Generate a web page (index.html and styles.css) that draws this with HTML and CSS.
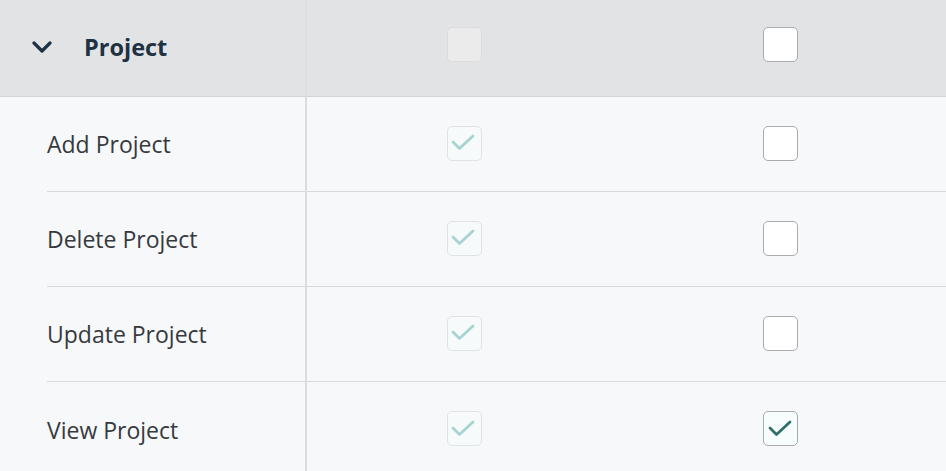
FILE: index.html
```html
<!DOCTYPE html>
<html>
<head>
<meta charset="utf-8">
<link rel="stylesheet" href="styles.css">
</head>
<body>
<div class="perm-table">
  <div class="row head">
    <div class="label-cell">
      <svg class="chev" width="20" height="12" viewBox="0 0 20 12"><path d="M2 2 L10 10 L18 2" fill="none" stroke="#1e3244" stroke-width="3.2" stroke-linecap="round" stroke-linejoin="round"/></svg>
      <span class="group-name">Project</span>
    </div>
    <div class="cell"><span class="cb cb-disabled"></span></div>
    <div class="cell last"><span class="cb"></span></div>
  </div>

  <div class="row">
    <div class="label-cell"><div class="label-inner">Add Project</div></div>
    <div class="cell"><span class="cb cb-disabled"><svg viewBox="0 0 35 35"><path d="M7 17 L13.5 23.5 L27 11" /></svg></span></div>
    <div class="cell last"><span class="cb"></span></div>
  </div>

  <div class="row">
    <div class="label-cell"><div class="label-inner">Delete Project</div></div>
    <div class="cell"><span class="cb cb-disabled"><svg viewBox="0 0 35 35"><path d="M7 17 L13.5 23.5 L27 11" /></svg></span></div>
    <div class="cell last"><span class="cb"></span></div>
  </div>

  <div class="row">
    <div class="label-cell"><div class="label-inner">Update Project</div></div>
    <div class="cell"><span class="cb cb-disabled"><svg viewBox="0 0 35 35"><path d="M7 17 L13.5 23.5 L27 11" /></svg></span></div>
    <div class="cell last"><span class="cb"></span></div>
  </div>

  <div class="row final">
    <div class="label-cell"><div class="label-inner">View Project</div></div>
    <div class="cell"><span class="cb cb-disabled"><svg viewBox="0 0 35 35"><path d="M7 17 L13.5 23.5 L27 11" /></svg></span></div>
    <div class="cell last"><span class="cb cb-checked"><svg viewBox="0 0 35 35"><path d="M7 17 L13.5 23.5 L27 11" /></svg></span></div>
  </div>
</div>
</body>
</html>
```

FILE: styles.css
```css
html, body {
  margin: 0;
  padding: 0;
  background: #f7f8fa;
}
body {
  font-family: "Open Sans", "Noto Sans", sans-serif;
  width: 946px;
  height: 471px;
  overflow: hidden;
}
.perm-table {
  display: flex;
  flex-direction: column;
}
.row {
  display: grid;
  grid-template-columns: 307px 314px 1fr;
  height: 95px;
  background: #f7f8fa;
}
.row.head {
  height: 97px;
  background: #e2e3e4;
}
.row.head .label-cell,
.row.head .cell {
  border-bottom: 1px solid #d3d4d6;
}
.label-cell {
  border-right: 2px solid #dcdddf;
  display: flex;
  align-items: stretch;
  padding-left: 47px;
}
.row.head .label-cell {
  padding-left: 32px;
  align-items: center;
  gap: 32px;
}
.chev {
  display: block;
  margin-top: -2px;
}
.group-name {
  font-weight: 700;
  font-size: 23.5px;
  color: #1e3244;
  margin-top: -3px;
}
.label-inner {
  flex: 1;
  display: flex;
  align-items: center;
  border-bottom: 1px solid #d8d9db;
  font-size: 23px;
  color: #363a3e;
  padding-left: 0;
}
.row.final .label-inner,
.row.final .cell {
  border-bottom: none;
}
.cell {
  display: flex;
  align-items: center;
  justify-content: center;
  border-bottom: 1px solid #d8d9db;
  padding-bottom: 2px;
}
.cell.last {
  padding-right: 6px;
}
.row.head .cell {
  padding-bottom: 8px;
}
.cb {
  box-sizing: border-box;
  width: 35px;
  height: 35px;
  border: 1.5px solid #a9abae;
  border-radius: 5px;
  background: #ffffff;
  display: block;
  position: relative;
}
.cb svg {
  position: absolute;
  left: -1.5px;
  top: -1.5px;
  width: 35px;
  height: 35px;
}
.cb svg path {
  fill: none;
  stroke-width: 2.8;
  stroke-linecap: round;
  stroke-linejoin: round;
}
.cb-disabled {
  border-color: #e1e2e4;
  background: #f7fafa;
}
.row.head .cb-disabled {
  background: #ebebec;
  border-color: #dcdcde;
}
.cb-disabled svg path {
  stroke: #a7d3d0;
}
.cb-checked {
  background: #f7fdfd;
}
.cb-checked svg path {
  stroke: #2f6f6c;
}
```
